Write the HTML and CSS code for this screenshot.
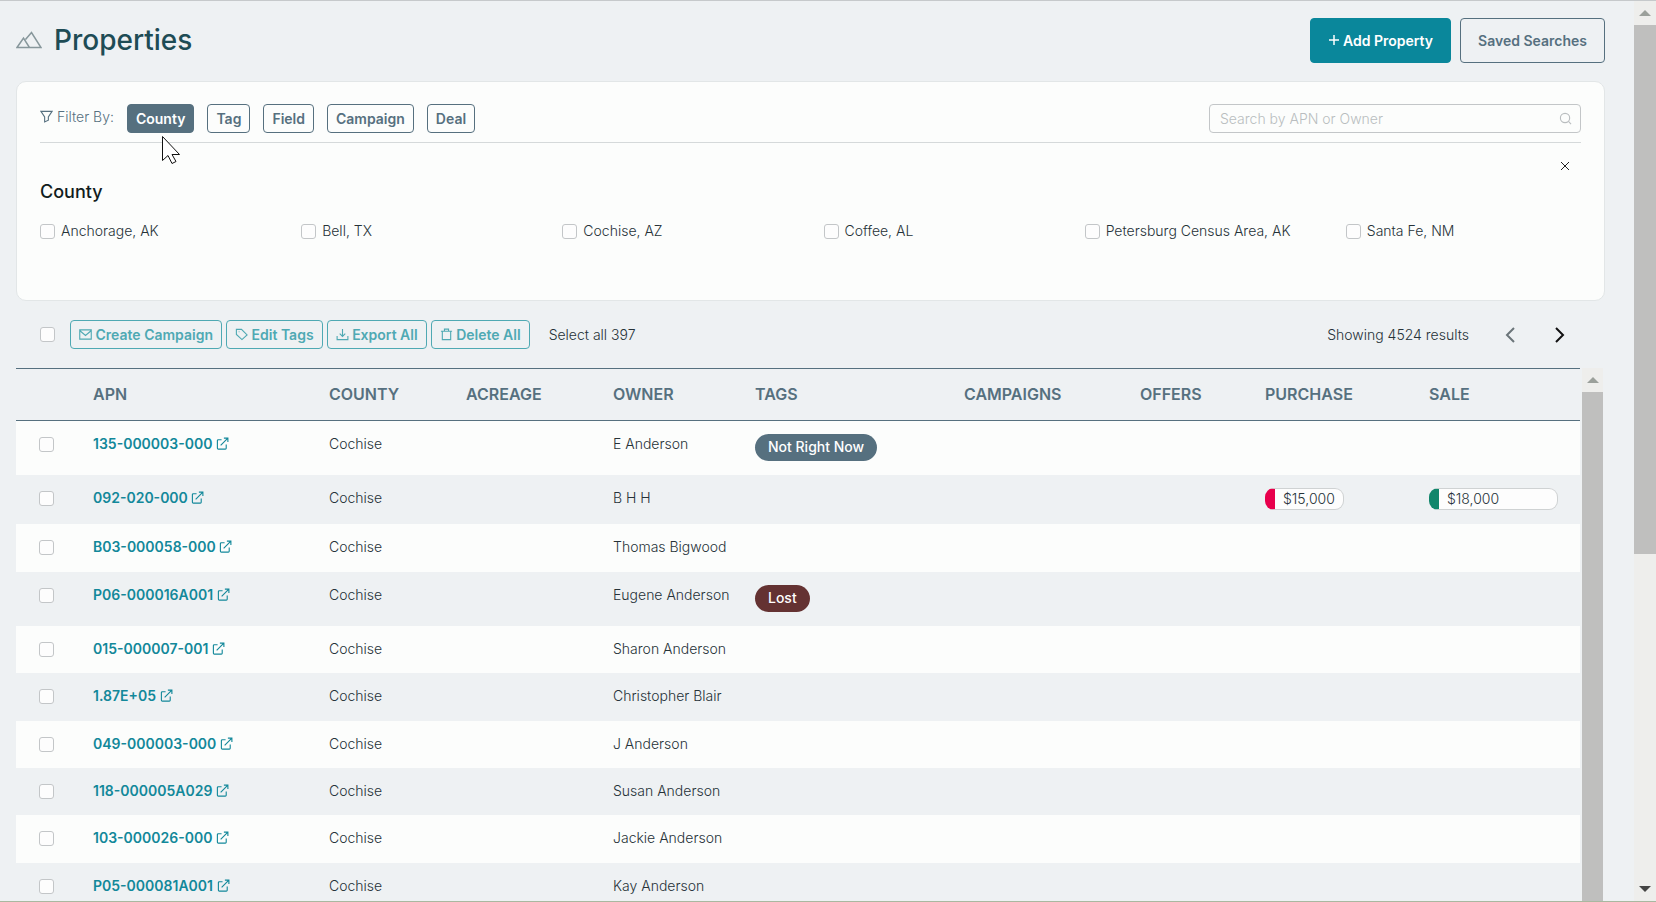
FILE: index.html
```html
<!DOCTYPE html>
<html lang="en">
<head>
  <meta charset="UTF-8">
  <meta name="viewport" content="width=device-width, initial-scale=1.0">
  <title>Properties</title>
  <link rel="stylesheet" href="styles.css">
</head>
<body>
  <svg class="sprite" aria-hidden="true">
    <symbol id="i-external" viewBox="0 0 14 14"><path d="M6 3H2.500Q1.500 3 1.500 4v8Q1.500 13 2.500 13h7.500Q11 13 11 12V8M5 9L12.500 1.500M8.500 1.200h4.300v4.300"/></symbol>
    <symbol id="i-mail" viewBox="0 0 14 14"><path d="M.8 2h12.400v10H.8zM1 3l6 5 6-5"/></symbol>
    <symbol id="i-tag" viewBox="0 0 14 14"><path d="M1.500 1.500h5.500l6 6-5.500 5L1.500 7zM4 4h.8"/></symbol>
    <symbol id="i-export" viewBox="0 0 14 14"><path d="M7 1v8M4 6l3 3 3-3M1.200 8.500v4h11.600v-4"/></symbol>
    <symbol id="i-trash" viewBox="0 0 14 14"><path d="M1 3.500h12M4.800 3.500V1.200h4.400v2.300M2.500 3.500v9h9v-9"/></symbol>
    <symbol id="i-filter" viewBox="0 0 14 14"><path d="M1 1.500h12L9 7.500v3.500L5 12.800V7.500z"/></symbol>
  </svg>

  <main>
    <header>
      <h1>
        <svg class="mountain" viewBox="0 0 26 18"><path d="M1 16.500L7.500 7l6 9.500zM9.500 8.500L15.500 1.500l9.500 15H13.500"/></svg>
        Properties
      </h1>
      <div class="actions">
        <button class="btn-large primary"><svg class="plus" viewBox="0 0 12 12"><path d="M6 1v10M1 6h10"/></svg>Add Property</button>
        <button class="btn-large">Saved Searches</button>
      </div>
    </header>

    <section class="filters">
      <div class="filter-bar">
        <span class="filter-label"><svg class="icon"><use href="#i-filter"/></svg> Filter By:</span>
        <button class="btn active">County</button>
        <button class="btn">Tag</button>
        <button class="btn">Field</button>
        <button class="btn">Campaign</button>
        <button class="btn">Deal</button>
        <div class="search">
          <input type="text" aria-label="Search by APN or Owner" placeholder="Search by APN or Owner">
          <svg class="icon" viewBox="0 0 14 14"><circle cx="6.500" cy="6.500" r="5"/><path d="M10.200 10.200L13 13"/></svg>
        </div>
      </div>
      <button class="close" aria-label="Close"><svg viewBox="0 0 10 10"><path d="M1 1l8 8M9 1L1 9"/></svg></button>
      <h2>County</h2>
      <div class="counties">
        <label><input type="checkbox">Anchorage, AK</label>
        <label><input type="checkbox">Bell, TX</label>
        <label><input type="checkbox">Cochise, AZ</label>
        <label><input type="checkbox">Coffee, AL</label>
        <label><input type="checkbox">Petersburg Census Area, AK</label>
        <label><input type="checkbox">Santa Fe, NM</label>
      </div>
    </section>

    <div class="toolbar">
      <input type="checkbox" aria-label="Select page">
      <div class="bulk">
        <button class="btn"><svg class="icon"><use href="#i-mail"/></svg> Create Campaign</button>
        <button class="btn"><svg class="icon"><use href="#i-tag"/></svg> Edit Tags</button>
        <button class="btn"><svg class="icon"><use href="#i-export"/></svg> Export All</button>
        <button class="btn"><svg class="icon"><use href="#i-trash"/></svg> Delete All</button>
      </div>
      <span>Select all 397</span>
      <div class="pager">
        <span>Showing 4524 results</span>
        <button class="prev" aria-label="Previous page"><svg viewBox="0 0 10 16"><path d="M9 1L2 8l7 7"/></svg></button>
        <button class="next" aria-label="Next page"><svg viewBox="0 0 10 16"><path d="M1 1l7 7-7 7"/></svg></button>
      </div>
    </div>

    <div class="table-wrap">
      <table>
        <colgroup>
          <col class="c-check"><col class="c-apn"><col class="c-county"><col class="c-acreage"><col class="c-owner">
          <col class="c-tags"><col class="c-campaigns"><col class="c-offers"><col class="c-purchase"><col class="c-sale">
        </colgroup>
        <thead>
          <tr><th></th><th>APN</th><th>COUNTY</th><th>ACREAGE</th><th>OWNER</th><th>TAGS</th><th>CAMPAIGNS</th><th>OFFERS</th><th>PURCHASE</th><th>SALE</th></tr>
        </thead>
        <tbody>
          <tr>
            <td><input type="checkbox" aria-label="Select 135-000003-000"></td>
            <td><a href="#">135-000003-000 <svg class="icon"><use href="#i-external"/></svg></a></td>
            <td>Cochise</td><td></td><td>E Anderson</td><td><span class="tag">Not Right Now</span></td><td></td><td></td><td></td><td></td>
          </tr>
          <tr>
            <td><input type="checkbox" aria-label="Select 092-020-000"></td>
            <td><a href="#">092-020-000 <svg class="icon"><use href="#i-external"/></svg></a></td>
            <td>Cochise</td><td></td><td>B H H</td><td></td><td></td><td></td><td><span class="price">$15,000</span></td><td><span class="price sale">$18,000</span></td>
          </tr>
          <tr>
            <td><input type="checkbox" aria-label="Select B03-000058-000"></td>
            <td><a href="#">B03-000058-000 <svg class="icon"><use href="#i-external"/></svg></a></td>
            <td>Cochise</td><td></td><td>Thomas Bigwood</td><td></td><td></td><td></td><td></td><td></td>
          </tr>
          <tr>
            <td><input type="checkbox" aria-label="Select P06-000016A001"></td>
            <td><a href="#">P06-000016A001 <svg class="icon"><use href="#i-external"/></svg></a></td>
            <td>Cochise</td><td></td><td>Eugene Anderson</td><td><span class="tag lost">Lost</span></td><td></td><td></td><td></td><td></td>
          </tr>
          <tr>
            <td><input type="checkbox" aria-label="Select 015-000007-001"></td>
            <td><a href="#">015-000007-001 <svg class="icon"><use href="#i-external"/></svg></a></td>
            <td>Cochise</td><td></td><td>Sharon Anderson</td><td></td><td></td><td></td><td></td><td></td>
          </tr>
          <tr>
            <td><input type="checkbox" aria-label="Select 1.87E+05"></td>
            <td><a href="#">1.87E+05 <svg class="icon"><use href="#i-external"/></svg></a></td>
            <td>Cochise</td><td></td><td>Christopher Blair</td><td></td><td></td><td></td><td></td><td></td>
          </tr>
          <tr>
            <td><input type="checkbox" aria-label="Select 049-000003-000"></td>
            <td><a href="#">049-000003-000 <svg class="icon"><use href="#i-external"/></svg></a></td>
            <td>Cochise</td><td></td><td>J Anderson</td><td></td><td></td><td></td><td></td><td></td>
          </tr>
          <tr>
            <td><input type="checkbox" aria-label="Select 118-000005A029"></td>
            <td><a href="#">118-000005A029 <svg class="icon"><use href="#i-external"/></svg></a></td>
            <td>Cochise</td><td></td><td>Susan Anderson</td><td></td><td></td><td></td><td></td><td></td>
          </tr>
          <tr>
            <td><input type="checkbox" aria-label="Select 103-000026-000"></td>
            <td><a href="#">103-000026-000 <svg class="icon"><use href="#i-external"/></svg></a></td>
            <td>Cochise</td><td></td><td>Jackie Anderson</td><td></td><td></td><td></td><td></td><td></td>
          </tr>
          <tr>
            <td><input type="checkbox" aria-label="Select P05-000081A001"></td>
            <td><a href="#">P05-000081A001 <svg class="icon"><use href="#i-external"/></svg></a></td>
            <td>Cochise</td><td></td><td>Kay Anderson</td><td></td><td></td><td></td><td></td><td></td>
          </tr>
        </tbody>
      </table>
      <div class="scrollbar inner"><i class="up"></i><div class="thumb"></div></div>
    </div>
  </main>

  <div class="scrollbar"><i class="up"></i><div class="thumb"></div><i class="down"></i></div>

  <svg class="cursor" viewBox="0 0 18 28"><path d="M.5.500v24l5.500-5 4 8 4-2-4-7h7.500z"/></svg>
</body>
</html>
```
FILE: styles.css
```css
* {
  box-sizing: border-box;
}

body {
  display: flex;
  height: 100vh;
  margin: 0;
  overflow: hidden;
  border-top: 1px solid #c6c9cb;
  border-bottom: 1px solid #a9b8a0;
  background: #eef1f3;
  color: #263238;
  font-family: Inter, sans-serif;
  font-size: 14px;
  font-weight: 300;
  line-height: 22px;
}

main {
  flex: 1;
  display: flex;
  flex-direction: column;
  min-width: 0;
  padding: 17px 29px 0 16px;
}

button {
  font: inherit;
  background: none;
  border: 0;
  padding: 0;
  cursor: pointer;
}

svg {
  fill: none;
  stroke: currentColor;
}

.sprite {
  position: absolute;
  width: 0;
  height: 0;
}

.icon {
  width: 13px;
  height: 13px;
  vertical-align: -1px;
  stroke-width: 1.2;
}

input[type="checkbox"] {
  appearance: none;
  display: block;
  flex: none;
  width: 15px;
  height: 15px;
  margin: 0;
  border: 1px solid #c3c6c8;
  border-radius: 3px;
  background: #fdfdfd;
}

header {
  display: flex;
  justify-content: space-between;
  height: 63px;
}

h1 {
  display: flex;
  align-items: center;
  gap: 12px;
  height: 43px;
  margin: 0;
  color: #1e4c55;
  font-size: 28px;
  font-weight: 500;
}

.mountain {
  width: 26px;
  height: 18px;
  color: #87979b;
  stroke-width: 1.5;
}

.actions {
  display: flex;
  gap: 9px;
}

.btn-large {
  height: 45px;
  padding: 0 17px;
  border: 1px solid #56707f;
  border-radius: 4px;
  color: #56707f;
  font-weight: 600;
}

.btn-large.primary {
  border-color: #0a879b;
  background: #0a879b;
  color: #fff;
}

.plus {
  width: 12px;
  height: 12px;
  margin-right: 3px;
  stroke-width: 1.5;
}

.filters {
  height: 220px;
  padding: 22px 23px 0;
  border: 1px solid #e2e6e7;
  border-radius: 10px;
  background: #fcfdfc;
}

.filter-bar {
  display: flex;
  gap: 13px;
  height: 39px;
  border-bottom: 1px solid #d5d9da;
}

.filter-label {
  height: 26px;
  line-height: 26px;
  color: #56707f;
}

.btn {
  height: 29px;
  padding: 0 8px;
  border: 1px solid #56707f;
  border-radius: 4px;
  color: #56707f;
  font-weight: 600;
  white-space: nowrap;
}

.btn.active {
  background: #56707f;
  color: #fff;
}

.search {
  display: flex;
  align-items: center;
  width: 372px;
  height: 29px;
  margin-left: auto;
  padding: 0 8px 0 10px;
  border: 1px solid #c3c6c8;
  border-radius: 4px;
  color: #b9bdbf;
}

.search input {
  flex: 1;
  padding: 0;
  border: 0;
  outline: 0;
  background: none;
  font: inherit;
}

.search input::placeholder {
  color: #b9bdbf;
}

.close {
  display: block;
  width: 10px;
  height: 10px;
  margin: 18px 11px 0 auto;
  color: #222;
}

.close svg {
  display: block;
}

h2 {
  margin: 10px 0 17px;
  color: #111c20;
  font-size: 18px;
  font-weight: 500;
  line-height: 22px;
}

.counties {
  display: grid;
  grid-template-columns: repeat(6, 1fr);
  gap: 26px;
}

.counties label {
  display: flex;
  align-items: center;
  gap: 6px;
  white-space: nowrap;
}

.toolbar {
  display: flex;
  align-items: center;
  height: 67px;
  padding: 0 36px 0 24px;
}

.bulk {
  display: flex;
  gap: 4px;
  margin: 0 19px 0 15px;
}

.bulk .btn {
  border-color: #4fa9b3;
  color: #4fa9b3;
}

.pager {
  display: flex;
  align-items: center;
  gap: 32px;
  margin-left: auto;
}

.pager button {
  width: 18px;
  height: 16px;
}

.pager svg {
  display: block;
  width: 10px;
  height: 16px;
  margin: auto;
  stroke-width: 2;
}

.prev {
  color: #6b7579;
}

.next {
  color: #111;
}

.table-wrap {
  flex: 1;
  display: flex;
  gap: 2px;
  align-items: stretch;
  min-height: 0;
  overflow: hidden;
}

table {
  flex: 1;
  align-self: flex-start;
  border-collapse: separate;
  border-spacing: 0;
  table-layout: fixed;
}

.c-check { width: 61px; }
.c-apn { width: 236px; }
.c-county { width: 137px; }
.c-acreage { width: 147px; }
.c-owner { width: 142px; }
.c-tags { width: 209px; }
.c-campaigns { width: 176px; }
.c-offers { width: 125px; }
.c-purchase { width: 164px; }
.c-sale { width: 167px; }

th {
  height: 53px;
  padding: 0 16px 2px;
  border-top: 1px solid #56707f;
  border-bottom: 1px solid #56707f;
  color: #56707f;
  font-size: 16px;
  font-weight: 600;
  text-align: left;
}

td {
  height: 47px;
  padding: 12px 0 12px 16px;
  vertical-align: top;
  white-space: nowrap;
}

tr:nth-child(3n) td {
  height: 48px;
}

td:first-child {
  padding: 16px 0 0 23px;
}

td:last-child {
  padding-right: 22px;
}

tbody tr:nth-child(odd) {
  background: #fcfdfc;
}

td a {
  color: #12889a;
  font-weight: 600;
  text-decoration: none;
}

.tag {
  display: block;
  width: fit-content;
  height: 27px;
  margin: 1px 0 2px;
  padding: 0 13px;
  border-radius: 14px;
  background: #56707f;
  color: #fff;
  font-weight: 500;
  line-height: 26px;
}

.tag.lost {
  background: #643232;
}

.price {
  display: block;
  width: fit-content;
  height: 22px;
  margin: 1px 0 2px;
  padding: 0 8px;
  border: 1px solid #cfd2d3;
  border-left: 10px solid #e8004c;
  border-radius: 9px;
  background: #fdfdfd;
  line-height: 20px;
}

.price.sale {
  width: auto;
  border-left-color: #11866b;
}

.scrollbar {
  display: flex;
  flex-direction: column;
  align-items: center;
  flex: none;
  width: 22px;
  background: #eeeeec;
}

.scrollbar .thumb {
  width: 100%;
  height: 529px;
  background: #bfbfbe;
}

.scrollbar i {
  height: 24px;
  flex: none;
}

.scrollbar i::before {
  content: "";
  display: block;
  margin-top: 9px;
  border: 6px solid transparent;
  border-top: 0;
  border-bottom-color: #9ba09b;
}

.scrollbar i.down {
  margin-top: auto;
}

.scrollbar i.down::before {
  border-top: 6px solid #444;
  border-bottom: 0;
}

.scrollbar.inner {
  width: 21px;
  margin-right: 2px;
}

.scrollbar.inner .thumb {
  flex: 1;
}

.cursor {
  position: absolute;
  left: 162px;
  top: 136px;
  width: 18px;
  height: 28px;
  fill: #fff;
  stroke: #111;
}
```
